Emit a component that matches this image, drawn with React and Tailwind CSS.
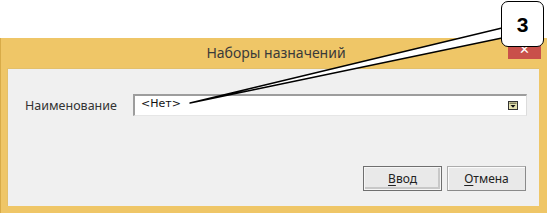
import React from "react";

const ui = { fontFamily: '"Noto Sans", "Open Sans", sans-serif' };

function Callout() {
  // pointer wedge from the numbered box down to the field
  return (
    <svg className="absolute left-0 top-0 pointer-events-none" width="548" height="214">
      <polygon points="190,103 502,28 502,38" fill="#fff" stroke="#000" strokeWidth="1.3" strokeLinejoin="round" />
    </svg>
  );
}

function DropIcon() {
  return (
    <svg width="10" height="9" viewBox="0 0 10 9">
      <rect x="0.5" y="0.5" width="9" height="8" fill="#e4e1b0" stroke="#333" />
      <rect x="1.5" y="1.5" width="7" height="1.5" fill="#7f7f5c" />
      <polygon points="2.5,4 7.5,4 5,6.8" fill="#111" />
    </svg>
  );
}

function Btn({ first, rest, primary }) {
  return (
    <button
      className={
        primary
          ? "w-[79px] h-[25px] bg-[#e9e9e9] border border-[#6f6f6f] shadow-[inset_0_0_0_1px_#f6f6f6,inset_-1px_-1px_0_2px_#c8c8c8] text-[12px] text-[#222]"
          : "w-[79px] h-[25px] bg-[#e9e9e9] border border-[#acacac] border-r-[#8a8a8a] border-b-[#8a8a8a] shadow-[inset_1px_1px_0_0_#fbfbfb] text-[12px] text-[#222]"
      }
      style={ui}
    >
      <span className="underline underline-offset-2">{first}</span>
      {rest}
    </button>
  );
}

export default function App() {
  return (
    <div className="relative w-[548px] h-[214px] bg-white overflow-hidden" style={ui}>
      <div className="h-[38px]" />
      <div className="w-[547px] h-[175px] bg-[#efc667] border-l border-[#d8ab48] flex flex-col">
        <div className="relative h-[30px] flex items-center justify-center">
          <span className="text-[14px] text-[#3a3a3a] pl-[4px] pb-[1px]">Наборы назначений</span>
          <div className="absolute right-[6px] top-[1px] w-[33px] h-[20px] bg-[#c9504a] flex items-center justify-center text-white text-[13px] leading-none">
            ✕
          </div>
        </div>
        <div className="ml-[6px] mr-[8px] mb-[7px] flex-1 bg-[#f0f0f0] border-t border-l border-[#e3c06b] flex flex-col">
          <div className="flex items-center pl-[17px] pr-[12px] mt-[25px]">
            <span className="w-[108px] text-[12.5px] text-[#333] pt-[3px]">Наименование</span>
            <div className="flex-1 h-[22px] bg-white border-t-2 border-l-2 border-[#9d9d9d] border-r border-b border-r-[#dcdcdc] border-b-[#e6e6e6] flex items-center justify-between pl-[6px] pr-[8px]">
              <span className="text-[11px] text-[#111] leading-none pb-[4px]" style={{ fontFamily: '"DejaVu Sans", sans-serif' }}>
                &lt;Нет&gt;
              </span>
              <DropIcon />
            </div>
          </div>
          <div className="flex-1" />
          <div className="flex justify-end gap-[5px] pr-[13px] pb-[15px]">
            <Btn first="В" rest="вод" primary />
            <Btn first="О" rest="тмена" />
          </div>
        </div>
      </div>
      <Callout />
      <div className="absolute left-[501px] top-[1px] w-[43px] h-[46px] bg-white border-[1.5px] border-black rounded-[7px] flex items-center justify-center">
        <span className="text-[21px] font-bold text-black leading-none" style={{ fontFamily: '"Liberation Sans", Arial, sans-serif' }}>
          3
        </span>
      </div>
    </div>
  );
}
